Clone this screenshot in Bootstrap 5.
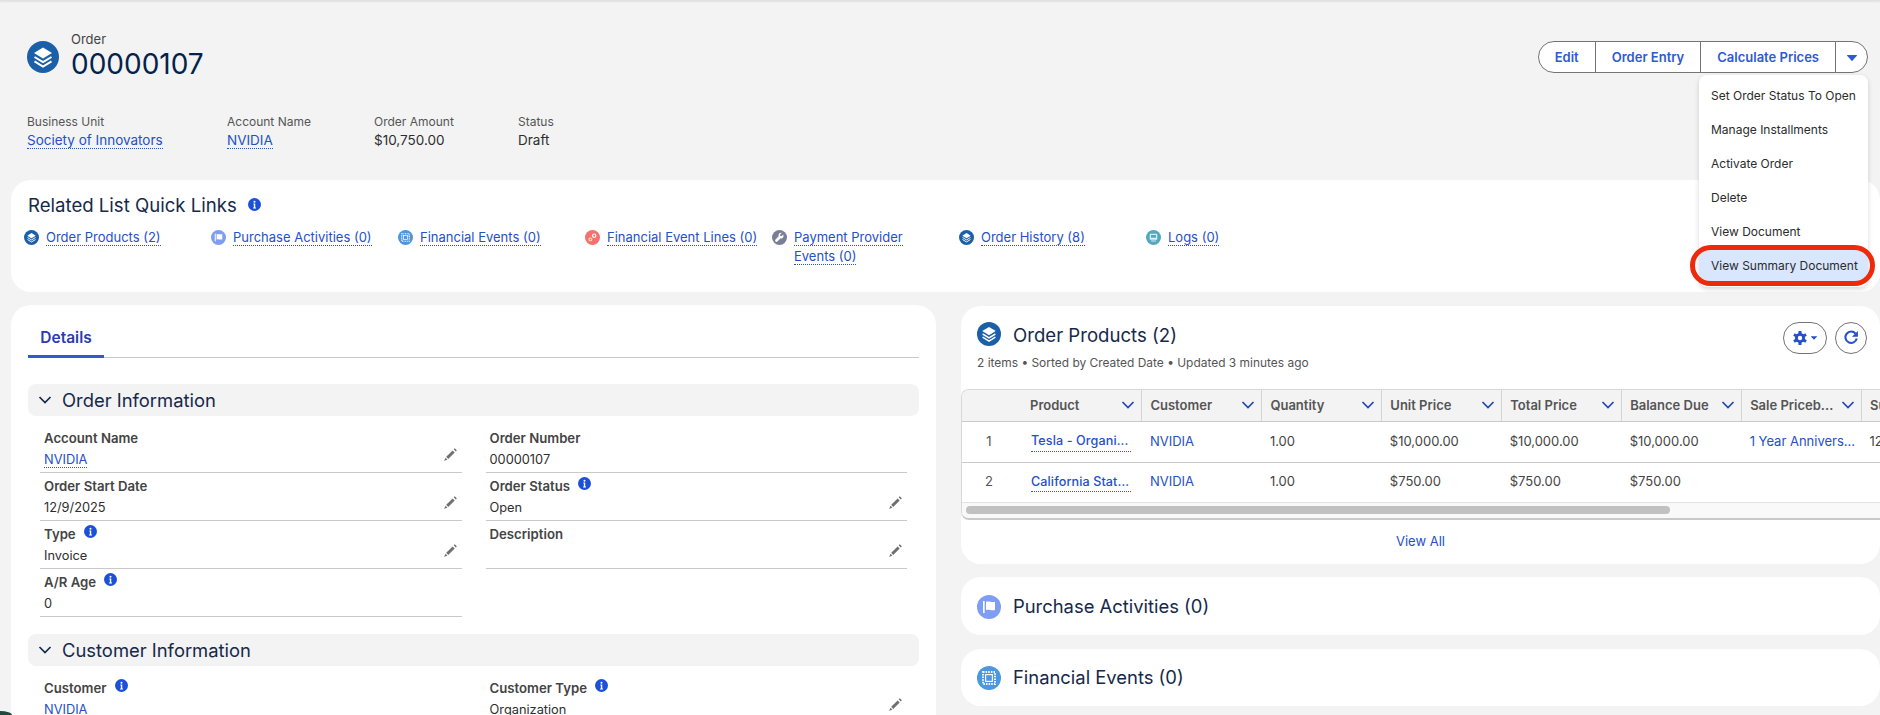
<!DOCTYPE html>
<html lang="en">
<head>
    <meta charset="UTF-8">
    <meta name="viewport" content="width=device-width, initial-scale=1.0">
    <title>Order 00000107</title>
    <link rel="stylesheet" href="https://cdn.jsdelivr.net/npm/bootstrap@5.3.0/dist/css/bootstrap.min.css">
    <style>
        body { background: #f3f3f3; font-family: Inter, "Liberation Sans", sans-serif; font-size: 13px; color: #2e2e2e; height: 715px; overflow: hidden; position: relative; box-shadow: inset 0 3px 2px -1px rgba(0,0,0,.07); }
        a { text-decoration: none; color: #2450c8; }
        .dot-link { border-bottom: 1px dotted #2450c8; }
        .rec-head { height: 180px; padding: 31px 12px 0 27px; }
        .rec-type { line-height: 16px; color: #444; }
        .rec-name { font-size: 28px; line-height: 34px; color: #03234d; margin-top: 0; }
        .rec-icon { width: 32px; height: 32px; margin: 10px 12px 0 0; }
        .rec-facts { margin-top: 32px; font-size: 13.5px; }
        .rec-facts > div { line-height: 18px; }
        .rec-facts > div:nth-child(1) { width: 200px; }
        .rec-facts > div:nth-child(2) { width: 147px; }
        .rec-facts > div:nth-child(3) { width: 144px; }
        .fact-label { color: #555; font-size: 12px; margin-bottom: 0; }
        .act-wrap { margin-top: 10px; }
        .act-btn { background: #fff; border: 1px solid #747474; color: #2e5bd1; font-size: 13px; font-weight: 600; height: 32px; padding: 0 16px; line-height: 29px; }
        .act-btn.btn:hover { background: #fff; color: #2e5bd1; border-color: #747474; }
        .btn-group > .act-first { border-radius: 16px 0 0 16px; }
        .btn-group > .act-last { border-radius: 0 16px 16px 0; padding: 0; width: 33px; }
        .caret-down { display: inline-block; width: 10px; height: 6px; }
        .act-menu { top: 34px; right: 0; left: auto; width: 169px; margin: 0; padding: 4px 0; border: 0; border-radius: 8px; font-size: 12px; box-shadow: 0 2px 5px rgba(0,0,0,.16); z-index: 5; }
        .act-menu .dropdown-item { height: 34px; line-height: 34px; padding: 0 12px; color: #2b2b2b; white-space: nowrap; }
        .act-menu .dropdown-item.act-hit { position: relative; background: #d8e6fe; }
        .act-hit::after { content: ""; position: absolute; top: -4px; bottom: -3px; left: -9px; right: -7px; border: 5px solid #ee2a0c; border-radius: 22px; }
        .shell { padding-left: 11px; }
        .ql-card { background: #fff; border-radius: 20px; height: 112px; padding: 13px 0 0 13px; }
        .ql-title { font-size: 18.6px; line-height: 24px; color: #16294a; margin: 0 0 11px 4px; }
        .ql-title .info-ic { margin-left: 11px; }
        .ql-grid { display: grid; grid-template-columns: repeat(7, 187px); }
        .ql-item { display: flex; gap: 7px; line-height: 19px; padding-right: 8px; }
        .ql-item svg { flex: none; margin-top: 2px; }
        .info-ic { width: 13px; height: 13px; margin-left: 8px; vertical-align: 1px; }
        .body-cols { margin-top: 13px; gap: 25px; }
        .detail-card { width: 925px; flex: none; background: #fff; border-radius: 20px 20px 0 0; height: 420px; padding: 17px 17px 0 17px; }
        .tab-strip { border-bottom: 1px solid #c9c9c9; height: 36px; }
        .tab-on { width: 76px; height: 36px; text-align: center; color: #2a3bb0; font-size: 15.5px; font-weight: 600; border-bottom: 3px solid #2e5bd1; line-height: 32px; }
        .sec-head { background: #f3f3f3; border-radius: 8px; height: 32px; margin-top: 26px; padding-left: 10px; font-size: 18.4px; color: #16294a; line-height: 30px; gap: 10px; }
        .sec-head + .fld-wrap { margin-top: 9px; }
        .sec-next { margin-top: 17px; }
        .fld-wrap { margin: 0 12px; }
        .fld { height: 48px; border-bottom: 1px solid #c9c9c9; padding: 4px 4px 0 4px; position: relative; }
        .fld-label { font-weight: 600; color: #444; line-height: 18px; font-size: 13.2px; }
        .fld-val { line-height: 26px; font-size: 12.8px; }
        .pen-ic { position: absolute; right: 4px; top: 22px; width: 15px; height: 15px; }
        .side-col { flex: 1; min-width: 0; margin-top: 1px; }
        .side-card { background: #fff; border-radius: 20px; }
        .prod-card { height: 258px; }
        .side-head { padding: 16px 13px 0 16px; }
        .side-title { font-size: 18.6px; line-height: 26px; color: #16294a; margin-left: 12px; }
        .side-sub { font-size: 11.95px; color: #555; line-height: 18px; }
        .round-btn { height: 32px; border: 1px solid #747474; border-radius: 16px; background: #fff; display: flex; align-items: center; justify-content: center; padding: 0; }
        .gear-btn { width: 44px; gap: 4px; }
        .ref-btn { width: 32px; }
        .prod-wrap { margin-top: 17px; border: 1px solid #d8d8d8; border-right: 0; border-bottom: 2px solid #c9c9c9; border-radius: 8px 0 0 8px; overflow: hidden; }
        .prod-table { width: 1020px; table-layout: fixed; margin: 0; font-size: 13px; color: #444; }
        .prod-table th { background: #f3f3f3; height: 31px; padding: 0 6px 0 8px; font-weight: 600; color: #555; border-bottom: 1px solid #c9c9c9; border-right: 1px solid #d4d4d4; vertical-align: middle; white-space: nowrap; }
        .prod-table th:first-child { border-right: 0; width: 60px; }
        .prod-table td { padding: 0 8px; height: 41px; vertical-align: middle; border-bottom: 1px solid #c9c9c9; color: #444; white-space: nowrap; }
        .prod-table tr:last-child td { height: 40px; border-bottom-color: #e3e3e3; }
        .prod-table td:first-child { text-align: center; padding: 0 14px 0 8px; color: #555; }
        .th-in { display: flex; justify-content: space-between; align-items: center; color: #555; }
        .th-in svg { color: #1f48b5; }
        .pname { display: inline-block; margin-left: 1px; width: 100px; font-weight: 500; font-size: 12.6px; letter-spacing: .1px; }
        .bar-track { height: 15px; background: #f9f9f9; padding: 3px 4px 0 4px; }
        .bar-thumb { height: 8px; width: 704px; background: #c1c1c1; border-radius: 4px; }
        .view-foot { text-align: center; padding-top: 12px; }
        .mini-card { height: 58px; margin-top: 13px; padding: 2px 16px 0; font-size: 18.4px; color: #16294a; }
        .mini-card + .mini-card { height: 57px; margin-top: 14px; padding-top: 1px; }
        .corner-bit { position: absolute; left: 0; bottom: 0; width: 12px; height: 4px; background: #1f4a3d; border-top-right-radius: 100%; }
    </style>
</head>
<body>
    <svg width="0" height="0" class="position-absolute">
        <symbol id="ic-stack" viewBox="0 0 32 32">
            <circle cx="16" cy="16" r="16" fill="#1b5fa9"/>
            <path d="M16 6.5 25 12 16 17.5 7 12Z" fill="#fff"/>
            <path d="M7.5 16 16 21.2 24.5 16M7.5 20.3 16 25.5 24.5 20.3" fill="none" stroke="#fff" stroke-width="2"/>
        </symbol>
        <symbol id="ic-flag" viewBox="0 0 32 32">
            <circle cx="16" cy="16" r="16" fill="#7f9df2"/>
            <path d="M8 8h2.2v16H8ZM12 9c4-1.5 6 1 12 0v11c-6 1-8-1.500-12 0Z" fill="#fff"/>
        </symbol>
        <symbol id="ic-stamp" viewBox="0 0 32 32">
            <circle cx="16" cy="16" r="16" fill="#4b97e0"/>
            <rect x="8" y="8" width="16" height="16" fill="none" stroke="#fff" stroke-width="2.500" stroke-dasharray="2 1.500"/>
            <rect x="11.500" y="11.500" width="9" height="9" fill="none" stroke="#fff" stroke-width="1.500"/>
        </symbol>
        <symbol id="ic-gears" viewBox="0 0 32 32">
            <circle cx="16" cy="16" r="16" fill="#f3726f"/>
            <circle cx="19.500" cy="12" r="3.500" fill="none" stroke="#fff" stroke-width="2.500"/>
            <circle cx="11.500" cy="20" r="3" fill="none" stroke="#fde0b0" stroke-width="2.500"/>
        </symbol>
        <symbol id="ic-wrench" viewBox="0 0 32 32">
            <circle cx="16" cy="16" r="16" fill="#7a7f96"/>
            <path d="M24 9.500l-4 4-2.500-1 -.5-2.500 4-4c-3.500-1-7.500 1.500-7 6 0 .8.200 1.500.2 1.500L7.500 20.500a2.800 2.800 0 0 0 4 4l6.500-6.500c4.500 1.500 8-3.500 6-8.500Z" fill="#fff"/>
        </symbol>
        <symbol id="ic-monitor" viewBox="0 0 32 32">
            <circle cx="16" cy="16" r="16" fill="#54a7bf"/>
            <rect x="8" y="8" width="16" height="13" rx="2" fill="#dff1f6"/>
            <rect x="10.500" y="10.500" width="11" height="6" fill="#54a7bf"/>
            <rect x="11" y="22.500" width="10" height="2" fill="#dff1f6"/>
        </symbol>
        <symbol id="ic-info" viewBox="0 0 14 14">
            <circle cx="7" cy="7" r="7" fill="#1c50d8"/>
            <circle cx="7" cy="4" r="1.100" fill="#fff"/>
            <path d="M5.800 6h2v4.200h.8v1H5.500v-1h.8V7h-.5Z" fill="#fff"/>
        </symbol>
        <symbol id="ic-pen" viewBox="0 0 14 14">
            <path d="M3 9.200 9 3.200 10.900 5.100 4.900 11.100ZM1 13l1.400-3 1.700 1.700ZM10 2.200l1-1 1.900 1.900-1 1Z" fill="#6f6f6f"/>
        </symbol>
        <symbol id="ic-chev" viewBox="0 0 14 14">
            <path d="M1.500 4 7 9.500 12.500 4" fill="none" stroke="currentColor" stroke-width="1.700"/>
        </symbol>
        <symbol id="ic-caret" viewBox="0 0 10 6">
            <path d="M.5 0h9a.5.500 0 0 1 .4.800L5.400 5.700a.5.500 0 0 1-.8 0L.1.800A.5.500 0 0 1 .5 0Z" fill="currentColor"/>
        </symbol>
    </svg>

    <div class="rec-head d-flex justify-content-between">
        <div>
            <div class="d-flex">
                <svg class="rec-icon"><use href="#ic-stack"/></svg>
                <div>
                    <div class="rec-type">Order</div>
                    <div class="rec-name">00000107</div>
                </div>
            </div>
            <div class="rec-facts d-flex">
                <div><div class="fact-label">Business Unit</div><a href="#" class="dot-link">Society of Innovators</a></div>
                <div><div class="fact-label">Account Name</div><a href="#" class="dot-link">NVIDIA</a></div>
                <div><div class="fact-label">Order Amount</div>$10,750.00</div>
                <div><div class="fact-label">Status</div>Draft</div>
            </div>
        </div>
        <div class="act-wrap position-relative align-self-start">
            <div class="btn-group">
                <button class="btn act-btn act-first">Edit</button>
                <button class="btn act-btn">Order Entry</button>
                <button class="btn act-btn">Calculate Prices</button>
                <button class="btn act-btn act-last"><svg class="caret-down"><use href="#ic-caret"/></svg></button>
            </div>
            <div class="dropdown-menu show act-menu">
                <a class="dropdown-item" href="#">Set Order Status To Open</a>
                <a class="dropdown-item" href="#">Manage Installments</a>
                <a class="dropdown-item" href="#">Activate Order</a>
                <a class="dropdown-item" href="#">Delete</a>
                <a class="dropdown-item" href="#">View Document</a>
                <a class="dropdown-item act-hit" href="#">View Summary Document</a>
            </div>
        </div>
    </div>

    <div class="shell">
        <div class="ql-card">
            <div class="ql-title">Related List Quick Links<svg class="info-ic"><use href="#ic-info"/></svg></div>
            <div class="ql-grid">
                <div class="ql-item"><svg width="15" height="15"><use href="#ic-stack"/></svg><div><a href="#" class="dot-link">Order Products (2)</a></div></div>
                <div class="ql-item"><svg width="15" height="15"><use href="#ic-flag"/></svg><div><a href="#" class="dot-link">Purchase Activities (0)</a></div></div>
                <div class="ql-item"><svg width="15" height="15"><use href="#ic-stamp"/></svg><div><a href="#" class="dot-link">Financial Events (0)</a></div></div>
                <div class="ql-item"><svg width="15" height="15"><use href="#ic-gears"/></svg><div><a href="#" class="dot-link">Financial Event Lines (0)</a></div></div>
                <div class="ql-item"><svg width="15" height="15"><use href="#ic-wrench"/></svg><div><a href="#" class="dot-link">Payment Provider<br>Events (0)</a></div></div>
                <div class="ql-item"><svg width="15" height="15"><use href="#ic-stack"/></svg><div><a href="#" class="dot-link">Order History (8)</a></div></div>
                <div class="ql-item"><svg width="15" height="15"><use href="#ic-monitor"/></svg><div><a href="#" class="dot-link">Logs (0)</a></div></div>
            </div>
        </div>

        <div class="body-cols d-flex">
            <div class="detail-card">
                <div class="tab-strip"><div class="tab-on">Details</div></div>

                <div class="sec-head d-flex align-items-center"><svg width="14" height="14"><use href="#ic-chev"/></svg>Order Information</div>
                <div class="fld-wrap">
                    <div class="row gx-4">
                        <div class="col-6"><div class="fld"><div class="fld-label">Account Name</div><div class="fld-val"><a href="#" class="dot-link">NVIDIA</a></div><svg class="pen-ic"><use href="#ic-pen"/></svg></div></div>
                        <div class="col-6"><div class="fld"><div class="fld-label">Order Number</div><div class="fld-val">00000107</div></div></div>
                        <div class="col-6"><div class="fld"><div class="fld-label">Order Start Date</div><div class="fld-val">12/9/2025</div><svg class="pen-ic"><use href="#ic-pen"/></svg></div></div>
                        <div class="col-6"><div class="fld"><div class="fld-label">Order Status<svg class="info-ic"><use href="#ic-info"/></svg></div><div class="fld-val">Open</div><svg class="pen-ic"><use href="#ic-pen"/></svg></div></div>
                        <div class="col-6"><div class="fld"><div class="fld-label">Type<svg class="info-ic"><use href="#ic-info"/></svg></div><div class="fld-val">Invoice</div><svg class="pen-ic"><use href="#ic-pen"/></svg></div></div>
                        <div class="col-6"><div class="fld"><div class="fld-label">Description</div><div class="fld-val">&nbsp;</div><svg class="pen-ic"><use href="#ic-pen"/></svg></div></div>
                        <div class="col-6"><div class="fld"><div class="fld-label">A/R Age<svg class="info-ic"><use href="#ic-info"/></svg></div><div class="fld-val">0</div></div></div>
                    </div>
                </div>

                <div class="sec-head sec-next d-flex align-items-center"><svg width="14" height="14"><use href="#ic-chev"/></svg>Customer Information</div>
                <div class="fld-wrap">
                    <div class="row gx-4">
                        <div class="col-6"><div class="fld"><div class="fld-label">Customer<svg class="info-ic"><use href="#ic-info"/></svg></div><div class="fld-val"><a href="#" class="dot-link">NVIDIA</a></div></div></div>
                        <div class="col-6"><div class="fld"><div class="fld-label">Customer Type<svg class="info-ic"><use href="#ic-info"/></svg></div><div class="fld-val">Organization</div><svg class="pen-ic"><use href="#ic-pen"/></svg></div></div>
                    </div>
                </div>
            </div>

            <div class="side-col">
                <div class="side-card prod-card">
                    <div class="side-head">
                        <div class="d-flex align-items-start">
                            <svg width="24" height="24"><use href="#ic-stack"/></svg>
                            <div class="side-title">Order Products (2)</div>
                            <div class="ms-auto d-flex gap-2">
                                <button class="round-btn gear-btn" aria-label="Settings">
                                    <svg width="14" height="14" viewBox="0 0 14 14" fill="#2450c8">
                                        <circle cx="7" cy="7" r="5"/>
                                        <g><rect x="5.500" y="0" width="3" height="14"/><rect x="5.500" y="0" width="3" height="14" transform="rotate(60 7 7)"/><rect x="5.500" y="0" width="3" height="14" transform="rotate(120 7 7)"/></g>
                                        <circle cx="7" cy="7" r="2.200" fill="#fff"/>
                                    </svg>
                                    <svg width="6" height="4" style="color:#2450c8"><use href="#ic-caret"/></svg>
                                </button>
                                <button class="round-btn ref-btn" aria-label="Refresh">
                                    <svg width="16" height="16" viewBox="0 0 14 14"><path d="M11 3.200A5 5 0 1 0 12 7.500" fill="none" stroke="#2450c8" stroke-width="1.800"/><path d="M13 .8V6H7.800Z" fill="#2450c8"/></svg>
                                </button>
                            </div>
                        </div>
                        <div class="side-sub">2 items • Sorted by Created Date • Updated 3 minutes ago</div>
                    </div>
                    <div class="prod-wrap">
                        <table class="table prod-table">
                            <thead>
                                <tr>
                                    <th></th>
                                    <th><div class="th-in">Product<svg width="14" height="14"><use href="#ic-chev"/></svg></div></th>
                                    <th><div class="th-in">Customer<svg width="14" height="14"><use href="#ic-chev"/></svg></div></th>
                                    <th><div class="th-in">Quantity<svg width="14" height="14"><use href="#ic-chev"/></svg></div></th>
                                    <th><div class="th-in">Unit Price<svg width="14" height="14"><use href="#ic-chev"/></svg></div></th>
                                    <th><div class="th-in">Total Price<svg width="14" height="14"><use href="#ic-chev"/></svg></div></th>
                                    <th><div class="th-in">Balance Due<svg width="14" height="14"><use href="#ic-chev"/></svg></div></th>
                                    <th><div class="th-in">Sale Priceb...<svg width="14" height="14"><use href="#ic-chev"/></svg></div></th>
                                    <th>Subscription</th>
                                </tr>
                            </thead>
                            <tbody>
                                <tr>
                                    <td>1</td>
                                    <td><a href="#" class="dot-link pname">Tesla - Organi...</a></td>
                                    <td><a href="#">NVIDIA</a></td>
                                    <td>1.00</td>
                                    <td>$10,000.00</td>
                                    <td>$10,000.00</td>
                                    <td>$10,000.00</td>
                                    <td><a href="#">1 Year Annivers...</a></td>
                                    <td>12</td>
                                </tr>
                                <tr>
                                    <td>2</td>
                                    <td><a href="#" class="dot-link pname">California Stat...</a></td>
                                    <td><a href="#">NVIDIA</a></td>
                                    <td>1.00</td>
                                    <td>$750.00</td>
                                    <td>$750.00</td>
                                    <td>$750.00</td>
                                    <td></td>
                                    <td></td>
                                </tr>
                            </tbody>
                        </table>
                        <div class="bar-track"><div class="bar-thumb"></div></div>
                    </div>
                    <div class="view-foot"><a href="#">View All</a></div>
                </div>
                <div class="side-card mini-card d-flex align-items-center"><svg width="24" height="24" class="me-2"><use href="#ic-flag"/></svg><span class="ms-1">Purchase Activities (0)</span></div>
                <div class="side-card mini-card d-flex align-items-center"><svg width="24" height="24" class="me-2"><use href="#ic-stamp"/></svg><span class="ms-1">Financial Events (0)</span></div>
            </div>
        </div>
    </div>
    <div class="corner-bit"></div>

    <script src="https://cdn.jsdelivr.net/npm/bootstrap@5.3.0/dist/js/bootstrap.bundle.min.js"></script>
</body>
</html>
